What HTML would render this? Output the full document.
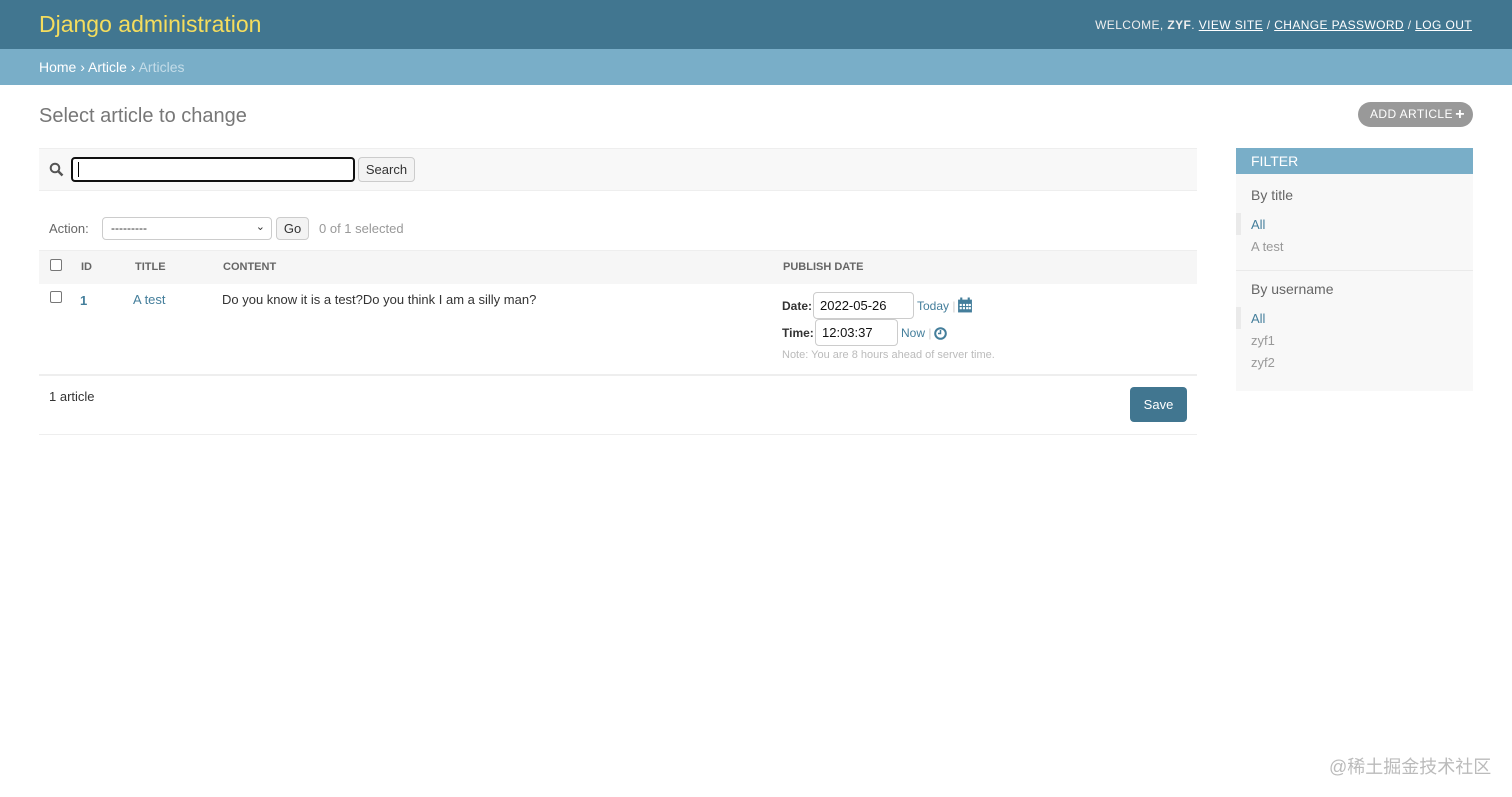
<!DOCTYPE html>
<html><head><meta charset="utf-8"><style>
*{box-sizing:border-box;margin:0;padding:0}
body{width:1512px;height:797px;background:#fff;font-family:"Liberation Sans",sans-serif;color:#333;position:relative;overflow:hidden;font-size:13px}
.a{position:absolute}
#hdr{left:0;top:0;width:1512px;height:49px;background:#417690}
#bc{left:0;top:49px;width:1512px;height:36px;background:#79aec8}
.lk{color:#447e9b}
input.t{position:absolute;border:1px solid #ccc;border-radius:4px;font:13px "Liberation Sans",sans-serif;padding:0 6px;background:#fff;color:#111}
.btn{position:absolute;border:1px solid #ccc;border-radius:4px;background:#f3f3f3;font-size:13px;text-align:center;color:#333}
</style></head><body>
<div id="hdr" class="a"></div>
<div class="a" style="left:39px;top:11px;font-size:23px;color:#f5dd5d;font-weight:300">Django administration</div>
<div class="a" style="right:40px;top:18px;font-size:12px;color:#eee;letter-spacing:.4px">WELCOME, <b>ZYF</b>. <span style="text-decoration:underline;color:#fff">VIEW SITE</span> / <span style="text-decoration:underline;color:#fff">CHANGE PASSWORD</span> / <span style="text-decoration:underline;color:#fff">LOG OUT</span></div>
<div id="bc" class="a"></div>
<div class="a" style="left:39px;top:59px;font-size:14px;color:#fff">Home › Article › <span style="color:#c4dce8">Articles</span></div>
<div class="a" style="left:39px;top:105px;font-size:20px;color:#777;font-weight:300">Select article to change</div>
<div class="a" style="left:1358px;top:102px;width:115px;height:25px;background:#999;border-radius:13px;color:#fff;font-size:12px;line-height:25px;padding-left:12px;letter-spacing:.4px">ADD ARTICLE <span style="font-weight:bold;font-size:16px;position:absolute;right:8px;top:0">+</span></div>
<div class="a" style="left:39px;top:148px;width:1158px;height:43px;background:#f8f8f8;border-top:1px solid #eee;border-bottom:1px solid #eee"></div>
<svg class="a" style="left:49px;top:162px" width="15" height="15" viewBox="0 0 15 15"><circle cx="6" cy="6" r="4.3" fill="none" stroke="#555" stroke-width="2"/><path d="M9 9l4.5 4.5" stroke="#555" stroke-width="2.5"/></svg>
<div class="a" style="left:71px;top:157px;width:284px;height:25px;border:2px solid #111;border-radius:4px;background:#fff"></div>
<div class="a" style="left:78px;top:162px;width:1px;height:15px;background:#000"></div>
<div class="btn" style="left:358px;top:157px;width:57px;height:25px;line-height:23px">Search</div>
<div class="a" style="left:49px;top:221px;color:#666">Action:</div>
<div class="a" style="left:102px;top:217px;width:170px;height:23px;border:1px solid #ccc;border-radius:4px;padding:3px 8px;font-size:12px">---------<span style="position:absolute;right:6px;top:2px;font-size:11px">⌄</span></div>
<div class="btn" style="left:276px;top:217px;width:33px;height:23px;line-height:21px">Go</div>
<div class="a" style="left:319px;top:221px;color:#999">0 of 1 selected</div>
<div class="a" style="left:39px;top:250px;width:1158px;height:34px;background:#f6f6f6;border-top:1px solid #eee"></div>
<div class="a" style="left:50px;top:259px;width:12px;height:12px;border:1px solid #777;border-radius:2px;background:#fff"></div>
<div class="a" style="top:261px;left:0;font-size:11px;font-weight:bold;color:#666;width:1000px">
<span class="a" style="left:81px">ID</span><span class="a" style="left:135px">TITLE</span><span class="a" style="left:223px">CONTENT</span><span class="a" style="left:783px">PUBLISH DATE</span></div>
<div class="a" style="left:50px;top:291px;width:12px;height:12px;border:1px solid #777;border-radius:2px;background:#fff"></div>
<div class="a lk" style="left:80px;top:293px;font-weight:bold">1</div>
<div class="a lk" style="left:133px;top:292px">A test</div>
<div class="a" style="left:222px;top:292px">Do you know it is a test?Do you think I am a silly man?</div>
<div class="a" style="left:782px;top:299px;font-weight:bold;font-size:12px">Date:</div>
<input class="t" style="left:813px;top:292px;width:101px;height:27px" value="2022-05-26">
<div class="a lk" style="left:917px;top:299px;font-size:12px">Today <span style="color:#ccc">|</span></div>
<svg class="a" style="left:957px;top:297px" width="16" height="17" viewBox="0 0 15 15"><rect x="1" y="2" width="13" height="12" fill="#447e9b"/><g fill="#fff"><rect x="2.5" y="6" width="2" height="2"/><rect x="5.5" y="6" width="2" height="2"/><rect x="8.5" y="6" width="2" height="2"/><rect x="11" y="6" width="2" height="2"/><rect x="2.5" y="9" width="2" height="2"/><rect x="5.5" y="9" width="2" height="2"/><rect x="8.5" y="9" width="2" height="2"/><rect x="11" y="9" width="2" height="2"/></g><rect x="3" y="0" width="2" height="4" fill="#447e9b"/><rect x="10" y="0" width="2" height="4" fill="#447e9b"/></svg>
<div class="a" style="left:782px;top:326px;font-weight:bold;font-size:12px">Time:</div>
<input class="t" style="left:815px;top:319px;width:83px;height:27px" value="12:03:37">
<div class="a lk" style="left:901px;top:326px;font-size:12px">Now <span style="color:#ccc">|</span></div>
<svg class="a" style="left:934px;top:327px" width="13" height="13" viewBox="0 0 13 13"><circle cx="6.5" cy="6.5" r="5.3" fill="none" stroke="#447e9b" stroke-width="2"/><path d="M6.5 3v3.5h-2.5" fill="none" stroke="#447e9b" stroke-width="1.5"/></svg>
<div class="a" style="left:782px;top:349px;font-size:11px;color:#bbb">Note: You are 8 hours ahead of server time.</div>
<div class="a" style="left:39px;top:374px;width:1158px;height:61px;border-top:2px solid #eee;border-bottom:1px solid #eee"></div>
<div class="a" style="left:49px;top:389px">1 article</div>
<div class="a" style="left:1130px;top:387px;width:57px;height:35px;background:#417690;border-radius:4px;color:#fff;font-size:13px;text-align:center;line-height:35px">Save</div>
<div class="a" style="left:1236px;top:148px;width:237px;height:243px;background:#f8f8f8"></div>
<div class="a" style="left:1236px;top:148px;width:237px;height:26px;background:#79aec8;color:#fff;font-size:14px;padding:5px 15px">FILTER</div>
<div class="a" style="left:1251px;top:187px;font-size:14px;color:#666">By title</div>
<div class="a" style="left:1236px;top:213px;width:5px;height:22px;background:#eaeaea"></div>
<div class="a lk" style="left:1251px;top:217px">All</div>
<div class="a" style="left:1251px;top:239px;color:#999">A test</div>
<div class="a" style="left:1236px;top:270px;width:237px;height:1px;background:#eaeaea"></div>
<div class="a" style="left:1251px;top:281px;font-size:14px;color:#666">By username</div>
<div class="a" style="left:1236px;top:307px;width:5px;height:22px;background:#eaeaea"></div>
<div class="a lk" style="left:1251px;top:311px">All</div>
<div class="a" style="left:1251px;top:333px;color:#999">zyf1</div>
<div class="a" style="left:1251px;top:355px;color:#999">zyf2</div>
<div class="a" style="left:1329px;top:753px;font-size:18px;color:#bbb;font-family:'Liberation Sans','Noto Sans CJK SC',sans-serif">@稀土掘金技术社区</div>
</body></html>
